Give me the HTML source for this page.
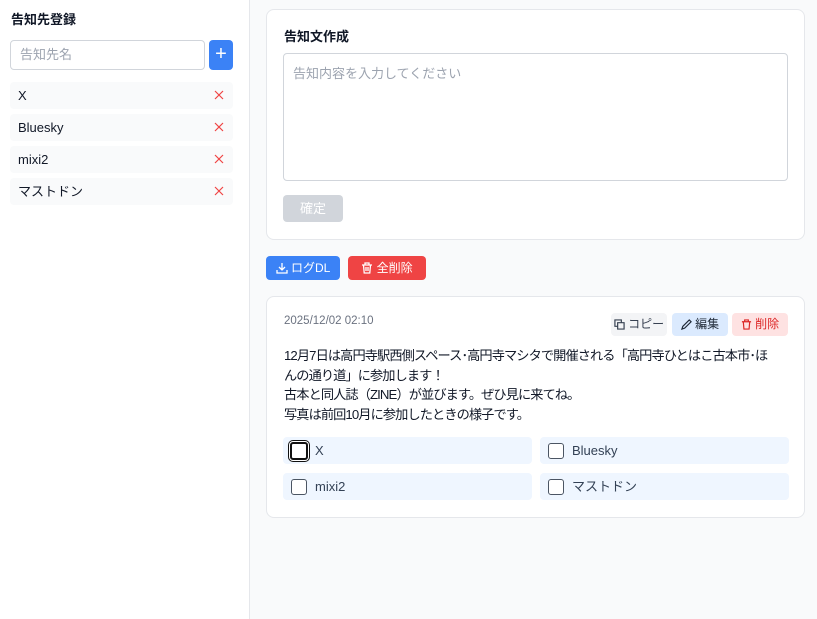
<!DOCTYPE html><html><head><meta charset="utf-8"><style>
*{box-sizing:border-box;margin:0;padding:0}
body{width:817px;height:619px;overflow:hidden;background:#f9fafb;font-family:"Liberation Sans","Noto Sans CJK JP",sans-serif;color:#111827;position:relative}
.abs{position:absolute}
.side{left:0;top:0;width:250px;height:619px;background:#fff;border-right:1px solid #e5e7eb}
.item{left:10px;width:223px;height:27px;background:#f9fafb;border-radius:4px;font-size:13px;line-height:27px;padding-left:8px}
.item span{position:absolute;right:9px;top:8px;line-height:0}
.card{left:266px;width:539px;background:#fff;border:1px solid #e5e7eb;border-radius:8px}
.btn{height:24px;border-radius:4px;font-size:12px;line-height:24px;color:#fff;text-align:center}
.sb{top:313px;height:23px;width:56px;border-radius:4px;font-size:12px;line-height:23px;text-align:center}
.cb{height:27px;width:249px;background:#eff6ff;border-radius:4px;font-size:13px;line-height:27px;padding-left:32px;color:#334155}
.cb i{position:absolute;left:8px;top:6px;width:16px;height:16px;border:1px solid #4b5563;border-radius:3px;background:#fff}
.btn svg,.sb svg{vertical-align:-2px}
</style></head><body>
<div class="abs side"></div>
<div class="abs" style="left:11px;top:9px;font-size:13px;font-weight:bold">告知先登録</div>
<div class="abs" style="left:10px;top:40px;width:195px;height:30px;border:1px solid #d1d5db;border-radius:4px;font-size:13px;line-height:28px;padding-left:9px;color:#9ca3af">告知先名</div>
<div class="abs" style="left:209px;top:40px;width:24px;height:30px;background:#3b82f6;border-radius:4px;color:#fff;text-align:center;font-size:20px;line-height:28px">+</div>
<div class="abs item" style="top:82px">X<span><svg width="10" height="10" viewBox="0 0 10 10" stroke="#ef4444" stroke-width="1.2"><path d="M1 1l8 8M9 1l-8 8"/></svg></span></div>
<div class="abs item" style="top:114px">Bluesky<span><svg width="10" height="10" viewBox="0 0 10 10" stroke="#ef4444" stroke-width="1.2"><path d="M1 1l8 8M9 1l-8 8"/></svg></span></div>
<div class="abs item" style="top:146px">mixi2<span><svg width="10" height="10" viewBox="0 0 10 10" stroke="#ef4444" stroke-width="1.2"><path d="M1 1l8 8M9 1l-8 8"/></svg></span></div>
<div class="abs item" style="top:178px">マストドン<span><svg width="10" height="10" viewBox="0 0 10 10" stroke="#ef4444" stroke-width="1.2"><path d="M1 1l8 8M9 1l-8 8"/></svg></span></div>

<div class="abs card" style="top:9px;height:231px"></div>
<div class="abs" style="left:284px;top:26px;font-size:13px;font-weight:bold">告知文作成</div>
<div class="abs" style="left:283px;top:53px;width:505px;height:128px;border:1px solid #d1d5db;border-radius:4px;font-size:13px;padding:9px 9px;color:#9ca3af">告知内容を入力してください</div>
<div class="abs btn" style="left:283px;top:195px;width:60px;height:27px;line-height:27px;background:#d1d5db;font-size:13px">確定</div>

<div class="abs btn" style="left:266px;top:256px;width:74px;background:#3b82f6"><svg width="12" height="12" viewBox="0 0 12 12" fill="none" stroke="#fff" stroke-width="1.3"><path d="M6 1v7M3 5l3 3 3-3M1 8v3h10V8"/></svg> ログDL</div>
<div class="abs btn" style="left:348px;top:256px;width:78px;background:#ef4444"><svg width="12" height="12" viewBox="0 0 12 12" fill="none" stroke="#fff" stroke-width="1.3"><path d="M1 3h10M4 3V1h4v2M2.5 3l.7 8h5.6l.7-8M5 5v4M7 5v4"/></svg> 全削除</div>

<div class="abs card" style="top:296px;height:222px"></div>
<div class="abs" style="left:284px;top:315px;font-size:11.5px;color:#6b7280">2025/12/02 02:10</div>
<div class="abs sb" style="left:611px;background:#f3f4f6;color:#374151"><svg width="11" height="11" viewBox="0 0 12 12" fill="none" stroke="#374151" stroke-width="1.3"><path d="M4 4h7v7H4zM8 4V1H1v7h3"/></svg> コピー</div>
<div class="abs sb" style="left:672px;background:#dbeafe;color:#1f2937"><svg width="11" height="11" viewBox="0 0 12 12" fill="none" stroke="#1f2937" stroke-width="1.3"><path d="M1 11l1-3 7-7 2 2-7 7z"/></svg> 編集</div>
<div class="abs sb" style="left:732px;background:#fee2e2;color:#dc2626"><svg width="11" height="11" viewBox="0 0 12 12" fill="none" stroke="#dc2626" stroke-width="1.3"><path d="M1 3h10M4 3V1h4v2M2.5 3l.7 8h5.6l.7-8"/></svg> 削除</div>
<div class="abs" style="left:284px;top:346px;white-space:nowrap;font-size:13.2px;letter-spacing:-0.9px;line-height:19.5px;color:#111827">12月7日は高円寺駅西側スペース･高円寺マシタで開催される「高円寺ひとはこ古本市･ほ<br>んの通り道」に参加します！<br>古本と同人誌（ZINE）が並びます。ぜひ見に来てね。<br>写真は前回10月に参加したときの様子です。</div>
<div class="abs cb" style="left:283px;top:437px"><i style="border:2px solid #111;box-shadow:0 0 0 1px #fff,0 0 0 2px #111;left:7px;top:5px;width:18px;height:18px"></i>X</div>
<div class="abs cb" style="left:540px;top:437px"><i></i>Bluesky</div>
<div class="abs cb" style="left:283px;top:473px"><i></i>mixi2</div>
<div class="abs cb" style="left:540px;top:473px"><i></i>マストドン</div>
</body></html>
